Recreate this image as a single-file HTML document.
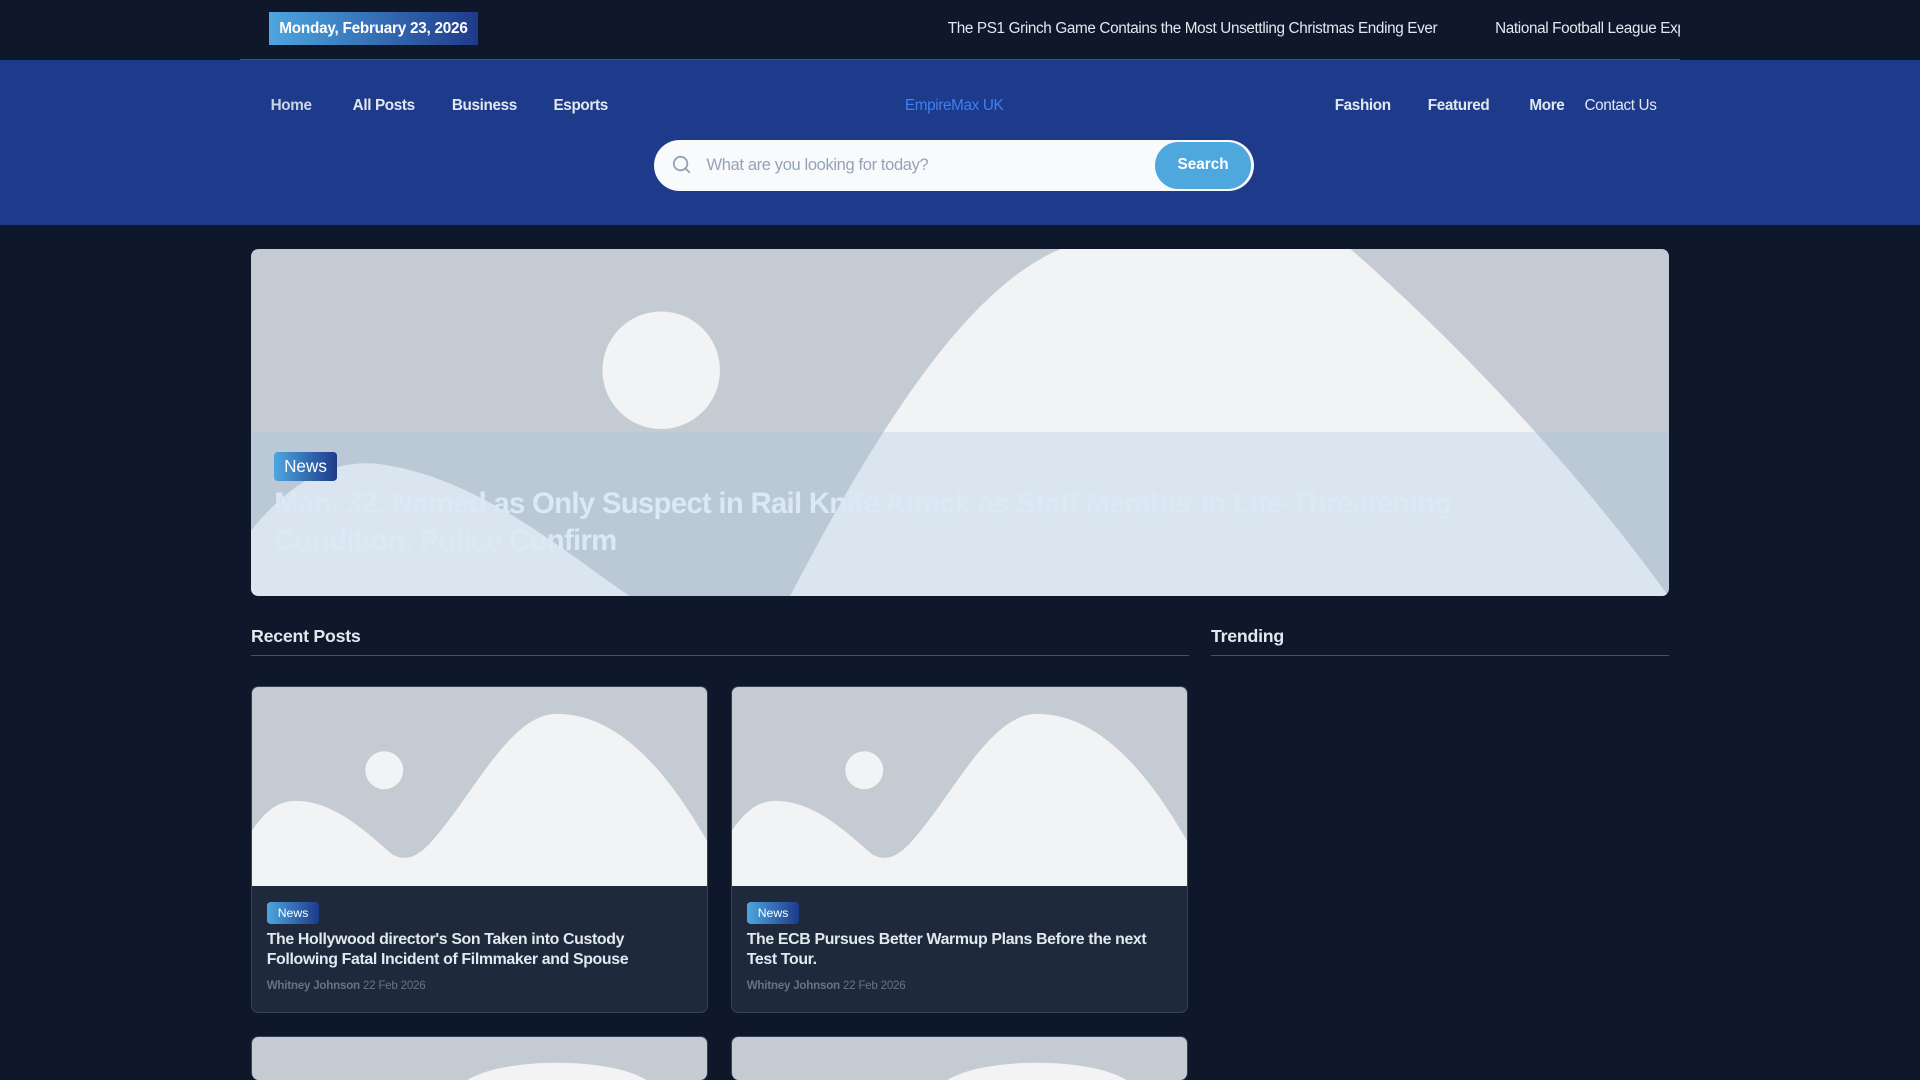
<!DOCTYPE html>
<html><head><meta charset="utf-8"><style>
html{zoom:1.22449;overflow:hidden}
*{box-sizing:border-box;margin:0;padding:0}
body{width:1568px;height:882px;overflow:hidden;background:#0f172a;font-family:"Liberation Sans",sans-serif;color:#e2e8f0;position:relative}
.top{height:49px;position:relative}
.top .line{position:absolute;left:196px;width:1176px;top:48px;height:1px;background:#475569}
.date{position:absolute;left:220px;top:10px;width:170px;height:27px;background:linear-gradient(90deg,#4ea6df,#1e3a8a);color:#fff;font-weight:bold;font-size:12.5px;letter-spacing:-.2px;line-height:27px;text-align:center}
.tick{position:absolute;top:16px;font-size:12.5px;letter-spacing:-.3px;color:#e2e8f0;white-space:nowrap}
.nav{position:absolute;top:49px;left:0;width:1568px;height:135px;background:#1e3a8a}
.nav a{position:absolute;top:30px;font-size:12.5px;letter-spacing:-.3px;color:#e2e8f0;font-weight:bold;text-decoration:none}
.search{position:absolute;left:534px;top:65px;width:490px;height:42px;background:#f8fafc;border-radius:21px}
.search span{position:absolute;left:43px;top:13px;font-size:13.5px;letter-spacing:-.3px;color:#94a3b8}
.search b{position:absolute;right:2px;top:2px;width:79px;height:38px;border-radius:19px;background:#4ea8de;color:#fff;font-size:12.5px;line-height:38px;text-align:center}
.hero{position:absolute;left:205px;top:203px;width:1158px;height:284px;border-radius:6px;overflow:hidden;background:#c4cbd2}
.ov{position:absolute;left:0;top:150px;width:100%;height:134px;background:rgba(165,200,225,.3)}
.tag{position:absolute;background:linear-gradient(90deg,#4ea6df,#1e3a8a);color:#fff;border-radius:3px}
.htitle{position:absolute;left:19px;top:194px;width:1040px;font-size:24px;letter-spacing:-.6px;font-weight:bold;line-height:30px;color:#dbe8f5}
h3{position:absolute;font-size:14.5px;letter-spacing:-.2px;color:#e2e8f0}
.hr{position:absolute;height:1px;background:#475569;top:535px}
.card{position:absolute;width:373px;height:267px;border:1px solid #334155;border-radius:6px;background:#1e293b;overflow:hidden}
.card svg{display:block}
.card .t{position:absolute;left:12px;top:199px;width:330px;font-size:13px;letter-spacing:-.3px;font-weight:bold;line-height:16px;color:#e2e8f0}
.card .m{position:absolute;left:12px;top:239px;font-size:9.5px;letter-spacing:-.2px;color:#6b7280}
</style></head><body>
<div class="top"><div class="date">Monday, February 23, 2026</div>
<div class="tick" style="left:774px">The PS1 Grinch Game Contains the Most Unsettling Christmas Ending Ever</div>
<div class="tick" style="left:1221px;width:151px;overflow:hidden">National Football League Expands</div>
<div class="line"></div></div>
<div class="nav">
<a style="left:221px;color:#cbd5e1">Home</a><a style="left:288px">All Posts</a><a style="left:369px">Business</a><a style="left:452px">Esports</a>
<a style="left:739px;color:#3b82f6;font-weight:normal">EmpireMax UK</a>
<a style="left:1090px">Fashion</a><a style="left:1166px">Featured</a><a style="left:1249px">More</a><a style="left:1294px;font-weight:normal">Contact Us</a>
<div class="search"><svg style="position:absolute;left:15px;top:13px" width="16" height="16" viewBox="0 0 16 16"><circle cx="7" cy="7" r="5.5" fill="none" stroke="#94a3b8" stroke-width="1.5"/><path d="M11 11l3.5 3.5" stroke="#94a3b8" stroke-width="1.5"/></svg><span>What are you looking for today?</span><b>Search</b></div>
</div>
<div class="hero"><svg width="1158" height="284" viewBox="0 0 1158 284"><circle cx="335" cy="99" r="48" fill="#f2f3f5"/><path d="M0 230 C40 180 80 170 113 177 C190 190 260 250 310 284 L0 284Z" fill="#f2f3f5"/><path d="M440 284 C520 130 590 30 661 0 L898 0 C1000 90 1090 190 1158 284Z" fill="#f2f3f5"/></svg>
<div class="ov"></div>
<div class="tag" style="left:19px;top:166px;width:51px;height:24px;font-size:14px;line-height:24px;text-align:center">News</div>
<div class="htitle">Man, 32, Named as Only Suspect in Rail Knife Attack as Staff Member in Life-Threatening Condition, Police Confirm</div></div>
<h3 style="left:205px;top:511px">Recent Posts</h3><div class="hr" style="left:205px;width:766px"></div>
<h3 style="left:989px;top:511px">Trending</h3><div class="hr" style="left:989px;width:374px"></div>
<div class="card" style="left:205px;top:560px"><svg width="373" height="163" viewBox="0 0 373 163"><rect width="373" height="163" fill="#c4cbd2"/><circle cx="108" cy="68" r="15.5" fill="#f2f3f5"/><path d="M0 117 C12 100 22 93 36 93 C70 93 100 125 115 137 C125 142 133 140 145 128 C180 90 210 22 249 22 C300 22 340 70 373 128 L373 163 L0 163Z" fill="#f2f3f5"/></svg>
<div class="tag" style="left:12px;top:176px;width:43px;height:18px;font-size:10px;line-height:18px;text-align:center">News</div>
<div class="t">The Hollywood director's Son Taken into Custody Following Fatal Incident of Filmmaker and Spouse</div>
<div class="m"><b>Whitney Johnson</b> 22 Feb 2026</div></div>
<div class="card" style="left:597px;top:560px"><svg width="373" height="163" viewBox="0 0 373 163"><rect width="373" height="163" fill="#c4cbd2"/><circle cx="108" cy="68" r="15.5" fill="#f2f3f5"/><path d="M0 117 C12 100 22 93 36 93 C70 93 100 125 115 137 C125 142 133 140 145 128 C180 90 210 22 249 22 C300 22 340 70 373 128 L373 163 L0 163Z" fill="#f2f3f5"/></svg>
<div class="tag" style="left:12px;top:176px;width:43px;height:18px;font-size:10px;line-height:18px;text-align:center">News</div>
<div class="t">The ECB Pursues Better Warmup Plans Before the next Test Tour.</div>
<div class="m"><b>Whitney Johnson</b> 22 Feb 2026</div></div>
<div class="card" style="left:205px;top:846px;height:36px;background:#c4cbd2;border-bottom:none"><svg width="373" height="36"><ellipse cx="249" cy="45" rx="80" ry="24" fill="#f2f3f5"/></svg></div>
<div class="card" style="left:597px;top:846px;height:36px;background:#c4cbd2;border-bottom:none"><svg width="373" height="36"><ellipse cx="249" cy="45" rx="80" ry="24" fill="#f2f3f5"/></svg></div>
</body></html>
